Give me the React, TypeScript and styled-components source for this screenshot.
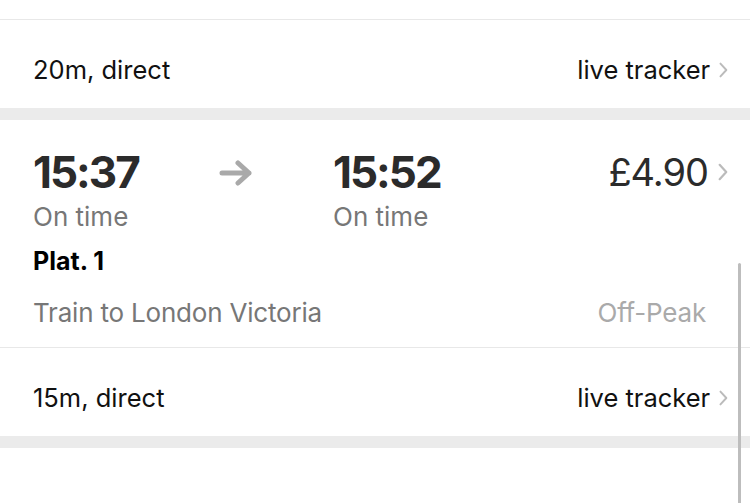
import styled, { createGlobalStyle } from 'styled-components';

const GlobalStyle = createGlobalStyle`
  html, body {
    margin: 0;
    padding: 0;
    background: #ffffff;
    font-family: Inter, 'Liberation Sans', Arial, sans-serif;
    overflow: hidden;
  }
`;

const Page = styled.div`
  width: 750px;
  height: 503px;
  overflow: hidden;
  background: #ffffff;
  position: relative;
`;

const Stub = styled.div`
  height: 19px;
  border-bottom: 1px solid #e8e8e8;
`;

const InfoRow = styled.div`
  height: 88px;
  box-sizing: border-box;
  display: flex;
  align-items: center;
  justify-content: space-between;
  padding: 11px 22px 0 33px;
  font-size: 25.5px;
  color: #111111;
`;

const TrackerLink = styled.div`
  display: flex;
  align-items: center;
  gap: 9px;
`;

const Band = styled.div`
  height: 12px;
  background: #ebebeb;
`;

const Card = styled.div`
  padding: 26px 22px 19px 33px;
  border-bottom: 1px solid #e8e8e8;
`;

const TimesGrid = styled.div`
  display: grid;
  grid-template-columns: 186px 114px 1fr auto;
  align-items: start;
`;

const Time = styled.div`
  font-size: 44px;
  font-weight: 700;
  line-height: 52px;
  letter-spacing: -2px;
  color: #2b2b2b;
`;

const Status = styled.div`
  font-size: 26px;
  line-height: 30px;
  margin-top: 4px;
  color: #777777;
`;

const ArrowBox = styled.div`
  padding-top: 14px;
`;

const Price = styled.div`
  display: flex;
  align-items: center;
  gap: 10px;
  font-size: 38px;
  letter-spacing: -1px;
  line-height: 52px;
  color: #2b2b2b;
`;

const Platform = styled.div`
  font-size: 25px;
  font-weight: 700;
  line-height: 30px;
  margin-top: 14px;
  color: #000000;
`;

const RouteRow = styled.div`
  display: flex;
  justify-content: space-between;
  align-items: center;
  margin-top: 22px;
  font-size: 26px;
  letter-spacing: -0.2px;
  line-height: 30px;
  padding-right: 22px;
`;

const RouteName = styled.span`
  color: #777777;
`;

const Fare = styled.span`
  color: #aaaaaa;
`;

const ScrollThumb = styled.div`
  position: absolute;
  right: 9px;
  top: 263px;
  width: 3px;
  height: 260px;
  border-radius: 2px;
  background: #bdbdbd;
`;

const Chevron = ({ size = 16 }: { size?: number }) => (
  <svg width={size * 0.55} height={size} viewBox="0 0 9 16" fill="none">
    <polyline
      points="1.5,1.5 7.5,8 1.5,14.5"
      stroke="#bbbbbb"
      strokeWidth="2"
      strokeLinecap="round"
      strokeLinejoin="round"
    />
  </svg>
);

const Arrow = () => (
  <svg width="34" height="26" viewBox="0 0 34 26" fill="none">
    <path
      d="M3 13 H30 M19 3 L30 13 L19 23"
      stroke="#a9a9a9"
      strokeWidth="5"
      strokeLinecap="round"
      strokeLinejoin="round"
    />
  </svg>
);

const Row = ({ duration }: { duration: string }) => (
  <InfoRow>
    <span>{duration}</span>
    <TrackerLink>
      live tracker
      <Chevron />
    </TrackerLink>
  </InfoRow>
);

export default function App() {
  return (
    <Page>
      <GlobalStyle />
      <Stub />
      <Row duration="20m, direct" />
      <Band />
      <Card>
        <TimesGrid>
          <div>
            <Time>15:37</Time>
            <Status>On time</Status>
          </div>
          <ArrowBox>
            <Arrow />
          </ArrowBox>
          <div>
            <Time>15:52</Time>
            <Status>On time</Status>
          </div>
          <Price>
            £4.90
            <Chevron size={18} />
          </Price>
        </TimesGrid>
        <Platform>Plat. 1</Platform>
        <RouteRow>
          <RouteName>Train to London Victoria</RouteName>
          <Fare>Off-Peak</Fare>
        </RouteRow>
      </Card>
      <Row duration="15m, direct" />
      <Band />
      <ScrollThumb />
    </Page>
  );
}
